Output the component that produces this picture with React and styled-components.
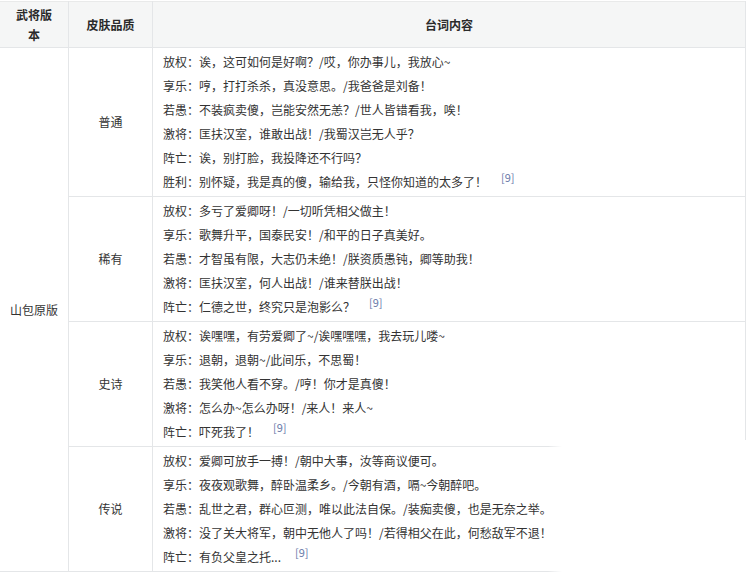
import React from "react"
import styled, { createGlobalStyle } from "styled-components"

const line = "#e4e6e8"

const rows = [
  {
    grade: "普通",
    lines: [
      "放权：诶，这可如何是好啊？/哎，你办事儿，我放心~",
      "享乐：哼，打打杀杀，真没意思。/我爸爸是刘备！",
      "若愚：不装疯卖傻，岂能安然无恙？/世人皆错看我，唉！",
      "激将：匡扶汉室，谁敢出战！/我蜀汉岂无人乎？",
      "阵亡：诶，别打脸，我投降还不行吗？",
      "胜利：别怀疑，我是真的傻，输给我，只怪你知道的太多了！",
    ],
  },
  {
    grade: "稀有",
    lines: [
      "放权：多亏了爱卿呀！/一切听凭相父做主！",
      "享乐：歌舞升平，国泰民安！/和平的日子真美好。",
      "若愚：才智虽有限，大志仍未绝！/朕资质愚钝，卿等助我！",
      "激将：匡扶汉室，何人出战！/谁来替朕出战！",
      "阵亡：仁德之世，终究只是泡影么？",
    ],
  },
  {
    grade: "史诗",
    lines: [
      "放权：诶嘿嘿，有劳爱卿了~/诶嘿嘿嘿，我去玩儿喽~",
      "享乐：退朝，退朝~/此间乐，不思蜀！",
      "若愚：我笑他人看不穿。/哼！你才是真傻！",
      "激将：怎么办~怎么办呀！/来人！来人~",
      "阵亡：吓死我了！",
    ],
  },
  {
    grade: "传说",
    lines: [
      "放权：爱卿可放手一搏！/朝中大事，汝等商议便可。",
      "享乐：夜夜观歌舞，醉卧温柔乡。/今朝有酒，嗝~今朝醉吧。",
      "若愚：乱世之君，群心叵测，唯以此法自保。/装痴卖傻，也是无奈之举。",
      "激将：没了关大将军，朝中无他人了吗！/若得相父在此，何愁敌军不退！",
      "阵亡：有负父皇之托...",
    ],
  },
]

const Global = createGlobalStyle`
  body {
    margin: 0;
    background: #fff;
    font-family: "Noto Sans CJK SC", "Noto Sans", sans-serif;
    color: #333;
    overflow: hidden;
  }
`

export default function App () {
  return (
    <Page>
      <Global />
      <Table>
        <colgroup>
          <col style={{ width: 69 }} />
          <col style={{ width: 84 }} />
          <col />
        </colgroup>
        <thead>
          <tr>
            <Head>武将版本</Head>
            <Head>皮肤品质</Head>
            <Head>台词内容</Head>
          </tr>
        </thead>
        <tbody>
          {rows.map((row, i) => (
            <tr key={row.grade}>
              {i === 0 && <Cell rowSpan={rows.length}>山包原版</Cell>}
              <Cell>{row.grade}</Cell>
              <Lines>
                {row.lines.map((text, j) => (
                  <Line key={j}>
                    {text}
                    {j === row.lines.length - 1 && <Ref>[9]</Ref>}
                  </Line>
                ))}
              </Lines>
            </tr>
          ))}
        </tbody>
      </Table>
      <Fade />
    </Page>
  )
}

const Page = styled.div`
  position: relative;
  width: 746px;
  height: 573px;
  overflow: hidden;
`

const Table = styled.table`
  width: 747px;
  border-collapse: collapse;
  table-layout: fixed;
  margin-top: 1px;
  margin-left: -1px;
  font-size: 12px;
`

const Head = styled.th`
  height: 45px;
  padding: 0 12px;
  background: #f5f6f6;
  border: 1px solid ${line};
  border-top-color: #e9eaea;
  font-weight: bold;
  line-height: 20px;
  color: #2b2b2b;
  text-align: center;
  vertical-align: middle;
`

const Cell = styled.td`
  border: 1px solid ${line};
  text-align: center;
  vertical-align: middle;
  line-height: 20px;
  padding: 0 6px;
`

const Lines = styled.td`
  border: 1px solid ${line};
  padding: 2px 10px 2px;
  vertical-align: middle;
`

const Line = styled.div`
  height: 24px;
  line-height: 24px;
  white-space: nowrap;
`

const Ref = styled.sup`
  margin-left: 14px;
  font-size: 11px;
  color: #6b7cab;
  vertical-align: 5px;
  line-height: 0;
`

const Fade = styled.div`
  position: absolute;
  left: 548px;
  top: 440px;
  right: 0;
  bottom: 0;
  background: linear-gradient(to right, rgba(255, 255, 255, 0), #fff 14px);
`
